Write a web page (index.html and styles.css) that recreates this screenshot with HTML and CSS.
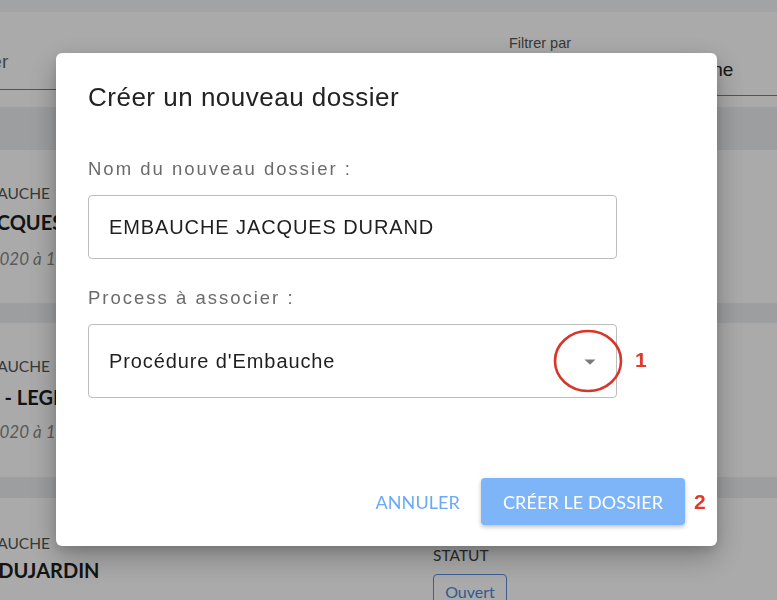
FILE: index.html
```html
<!DOCTYPE html>
<html lang="fr">
<head>
<meta charset="utf-8">
<title>Créer un nouveau dossier</title>
<link rel="stylesheet" href="styles.css">
</head>
<body>
<div class="page">
  <div class="topbar"></div>
  <div class="filters">
    <div class="search"><span class="search-text">Rechercher</span></div>
    <div class="filter">
      <span class="filter-label">Filtrer par</span>
      <span class="filter-value">Personne</span>
    </div>
  </div>
  <div class="list">
    <div class="sep sep-first"></div>
    <div class="card card-1">
      <div class="card-main">
        <div class="card-type">EMBAUCHE</div>
        <div class="card-name">M. JACQUES DURAND</div>
        <div class="card-date">le 12/03/2020 à 10:32</div>
      </div>
    </div>
    <div class="sep sep-2"></div>
    <div class="card card-2">
      <div class="card-main">
        <div class="card-type">EMBAUCHE</div>
        <div class="card-name">ALIX - LEGRAND</div>
        <div class="card-date">le 09/03/2020 à 16:05</div>
      </div>
    </div>
    <div class="sep sep-3"></div>
    <div class="card card-3">
      <div class="card-main">
        <div class="card-type">EMBAUCHE</div>
        <div class="card-name">JEAN DUJARDIN</div>
      </div>
      <div class="card-status">
        <div class="status-label">STATUT</div>
        <div class="status-badge">Ouvert</div>
      </div>
    </div>
  </div>
</div>

<div class="overlay"></div>

<div class="modal">
  <h2 class="modal-title">Créer un nouveau dossier</h2>
  <label class="field-label">Nom du nouveau dossier :</label>
  <div class="field-input">EMBAUCHE JACQUES DURAND</div>
  <label class="field-label field-label-2">Process à associer :</label>
  <div class="field-select">
    <span>Procédure d'Embauche</span>
    <svg class="select-arrow" width="12" height="6" viewBox="0 0 12 6"><path d="M0.5 0.5 L11.5 0.5 L6 5.8 Z" fill="#7a7a7a"/></svg>
  </div>
  <div class="modal-actions">
    <button class="btn btn-text">ANNULER</button>
    <button class="btn btn-primary">CRÉER LE DOSSIER</button>
  </div>
</div>

<svg class="annot-ellipse" width="74" height="66" viewBox="0 0 74 66"><ellipse cx="37" cy="33" rx="33" ry="30" fill="none" stroke="#d8352a" stroke-width="2.6"/></svg>
<span class="annot-num annot-1">1</span>
<span class="annot-num annot-2">2</span>
</body>
</html>
```
FILE: styles.css
```css
* { box-sizing: border-box; }
html, body { margin: 0; padding: 0; }
body {
  width: 777px;
  height: 600px;
  overflow: hidden;
  background: #ffffff;
  font-family: "Lato", "Liberation Sans", sans-serif;
  position: relative;
}

.page { width: 777px; }
.topbar { height: 12px; background: #f4f5f7; }

.filters {
  height: 95px;
  background: #ffffff;
  display: flex;
  justify-content: space-between;
  font-family: "Liberation Sans", sans-serif;
}
.search {
  margin-left: -90px;
  width: 380px;
  height: 78px;
  border-bottom: 1.5px solid #7d7d7d;
  display: flex;
  align-items: flex-end;
  padding-bottom: 16px;
}
.search-text { font-size: 19px; color: #6a6a6a; }
.filter {
  width: 268px;
  height: 84px;
  border-bottom: 1.5px solid #7d7d7d;
  display: flex;
  flex-direction: column;
  padding-top: 23px;
}
.filter-label { font-size: 14.5px; color: #555; }
.filter-value { font-size: 19px; color: #222; margin-top: 8px; padding-left: 143px; }

.list { display: flex; flex-direction: column; }
.sep { background: #eceef1; }
.sep-first { height: 43px; }
.sep-2 { height: 20px; }
.sep-3 { height: 21px; }
.card { background: #ffffff; display: flex; }
.card-1 { height: 153px; }
.card-2 { height: 154px; }
.card-3 { height: 110px; }

.card-main { margin-left: -36px; padding-top: 34px; width: 300px; flex: none; }
.card-type { font-size: 15.5px; color: #555; line-height: 18px; }
.card-name { font-size: 20px; font-weight: 700; color: #1d1d1d; line-height: 24px; margin-top: 8px; white-space: nowrap; }
.card-1 .card-name { margin-left: -17px; }
.card-2 .card-name { margin-left: -8px; }
.card-date { font-size: 17px; font-style: italic; color: #888; margin-top: 14px; margin-left: -44px; white-space: nowrap; }
.card-2 .card-name { margin-top: 10px; }
.card-2 .card-date { margin-top: 12px; }
.card-3 .card-main { padding-top: 36px; }
.card-3 .card-name { margin-top: 6px; margin-left: -20px; }

.card-status { margin-left: 169px; padding-top: 48px; }
.status-label { font-size: 15.5px; color: #444; }
.status-badge {
  margin-top: 10px;
  width: 74px;
  height: 34px;
  border: 1.5px solid #5c8ed6;
  border-radius: 4px;
  color: #4f86d4;
  font-size: 16px;
  text-align: center;
  padding-top: 7px;
}

.overlay {
  position: fixed;
  inset: 0;
  background: rgba(0, 0, 0, 0.335);
}

.modal {
  position: fixed;
  left: 56px;
  top: 53px;
  width: 661px;
  height: 493px;
  background: #ffffff;
  border-radius: 6px;
  box-shadow: 0 11px 30px rgba(0, 0, 0, 0.28), 0 4px 10px rgba(0,0,0,0.12);
  padding: 28px 32px 21px 32px;
  font-family: "Liberation Sans", "Arial", sans-serif;
  display: flex;
  flex-direction: column;
}
.modal-title {
  margin: 0;
  font-size: 26px;
  font-weight: 400;
  color: #222;
  line-height: 32px;
  letter-spacing: 0.5px;
}
.field-label {
  display: block;
  margin-top: 45px;
  font-size: 18.5px;
  line-height: 22px;
  color: #6b6b6b;
  letter-spacing: 2px;
}
.field-label-2 { margin-top: 28px; }
.field-input, .field-select {
  width: 529px;
  border: 1px solid #bdbdbd;
  border-radius: 4px;
  font-size: 20px;
  color: #1f1f1f;
  padding-left: 20px;
  display: flex;
  align-items: center;
  letter-spacing: 0.9px;
}
.field-input { height: 64px; margin-top: 15px; }
.field-select { height: 74px; margin-top: 15px; justify-content: space-between; padding-right: 20px; }
.select-arrow { margin-top: 2px; }

.modal-actions {
  margin-top: auto;
  display: flex;
  justify-content: flex-end;
  align-items: center;
  gap: 21px;
}
.btn {
  font-family: "Lato", sans-serif;
  font-size: 18px;
  border: none;
  background: none;
  cursor: pointer;
  letter-spacing: 0.1px;
}
.btn-text { color: #6aaaf5; padding: 0; }
.btn-primary {
  width: 204px;
  height: 47px;
  background: #7db5f8;
  color: #ffffff;
  border-radius: 4px;
  box-shadow: 0 2px 4px rgba(0, 0, 0, 0.25);
}

.annot-ellipse { position: fixed; left: 551px; top: 328px; }
.annot-num {
  position: fixed;
  font-family: "Liberation Sans", sans-serif;
  font-weight: 700;
  font-size: 21px;
  color: #df3a2c;
}
.annot-1 { left: 635px; top: 348px; }
.annot-2 { left: 694px; top: 490px; }
```
